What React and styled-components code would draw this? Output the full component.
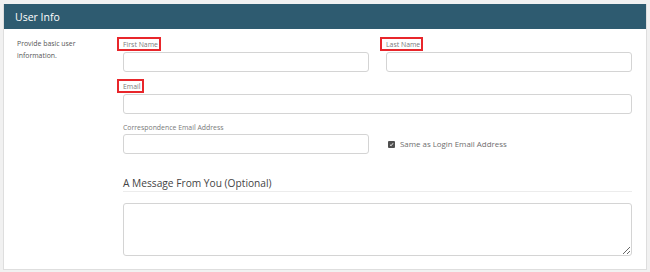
import React from "react";
import styled, { createGlobalStyle } from "styled-components";

const GlobalStyle = createGlobalStyle`
  body {
    margin: 0;
    background: #f1f1f1;
    font-family: "Open Sans", "Liberation Sans", sans-serif;
  }
`;

const Page = styled.div`
  padding: 4px 3px 2px 3px;
`;

const Panel = styled.section`
  background: #ffffff;
  border: 1px solid #dedede;
  border-top: none;
`;

const Header = styled.div`
  height: 25px;
  background: #2e5b70;
  color: #ffffff;
  font-size: 10.5px;
  display: flex;
  align-items: center;
  padding-left: 11px;
`;

const Body = styled.div`
  display: grid;
  grid-template-columns: 119px 1fr;
  padding: 8px 14px 13px 0;
`;

const Description = styled.p`
  margin: 1px 0 0 13px;
  width: 80px;
  font-size: 6.9px;
  line-height: 11.5px;
  color: #555;
`;

const Fields = styled.div`
  display: flex;
  flex-direction: column;
`;

const Row = styled.div`
  display: grid;
  grid-template-columns: ${(p) => (p.split ? "1fr 1fr" : "1fr")};
  column-gap: 17px;
  margin-top: ${(p) => p.gap || 0}px;
`;

const Field = styled.div`
  display: flex;
  flex-direction: column;
`;

const Label = styled.label`
  align-self: flex-start;
  height: 14px;
  display: flex;
  align-items: center;
  box-sizing: border-box;
  font-size: 6.9px;
  color: #7a7a7a;
  margin-bottom: ${(p) => (p.flagged ? 1 : 0)}px;
  margin-left: ${(p) => (p.flagged ? -6 : 0)}px;
  padding: 0 ${(p) => (p.flagged ? 1 : 0)}px 0 ${(p) => (p.flagged ? 4 : 0)}px;
  border: ${(p) => (p.flagged ? "2px solid #e8262b" : "none")};
`;

const Input = styled.input`
  box-sizing: border-box;
  height: 20px;
  width: 100%;
  border: 1px solid #d4d4d4;
  border-radius: 3px;
  background: #fff;
  font-family: inherit;
  font-size: 8px;
  padding: 0 6px;
  outline: none;
`;

const CheckRow = styled.div`
  display: flex;
  align-items: center;
  gap: 5px;
  padding-left: 2px;
  padding-top: 14px;
  font-size: 7.9px;
  color: #6e6e6e;
`;

const CheckBox = styled.span`
  width: 7px;
  height: 7px;
  border-radius: 1px;
  background: #505050;
  display: inline-flex;
  align-items: center;
  justify-content: center;
`;

const SectionTitle = styled.h3`
  margin: 22px 0 0 0;
  padding-bottom: 0;
  border-bottom: 1px solid #ececec;
  font-weight: 400;
  font-size: 10.2px;
  line-height: 15px;
  color: #444;
`;

const TextArea = styled.textarea`
  box-sizing: border-box;
  margin-top: 11px;
  height: 53px;
  width: 100%;
  border: 1px solid #d4d4d4;
  border-radius: 3px;
  resize: vertical;
  font-family: inherit;
  outline: none;
  display: block;
`;

export default function App() {
  return (
    <>
      <GlobalStyle />
      <Page>
        <Panel>
          <Header>User Info</Header>
          <Body>
            <Description>Provide basic user information.</Description>
            <Fields>
              <Row split>
                <Field>
                  <Label flagged>First Name</Label>
                  <Input />
                </Field>
                <Field>
                  <Label flagged>Last Name</Label>
                  <Input />
                </Field>
              </Row>
              <Row gap={7}>
                <Field>
                  <Label flagged>Email</Label>
                  <Input />
                </Field>
              </Row>
              <Row split gap={6}>
                <Field>
                  <Label>Correspondence Email Address</Label>
                  <Input />
                </Field>
                <CheckRow>
                  <CheckBox>
                    <svg width="5" height="5" viewBox="0 0 10 10">
                      <path d="M2 5.5 L4.2 7.5 L8 2.5" stroke="#fff" strokeWidth="1.8" fill="none" />
                    </svg>
                  </CheckBox>
                  Same as Login Email Address
                </CheckRow>
              </Row>
              <SectionTitle>A Message From You (Optional)</SectionTitle>
              <TextArea />
            </Fields>
          </Body>
        </Panel>
      </Page>
    </>
  );
}
